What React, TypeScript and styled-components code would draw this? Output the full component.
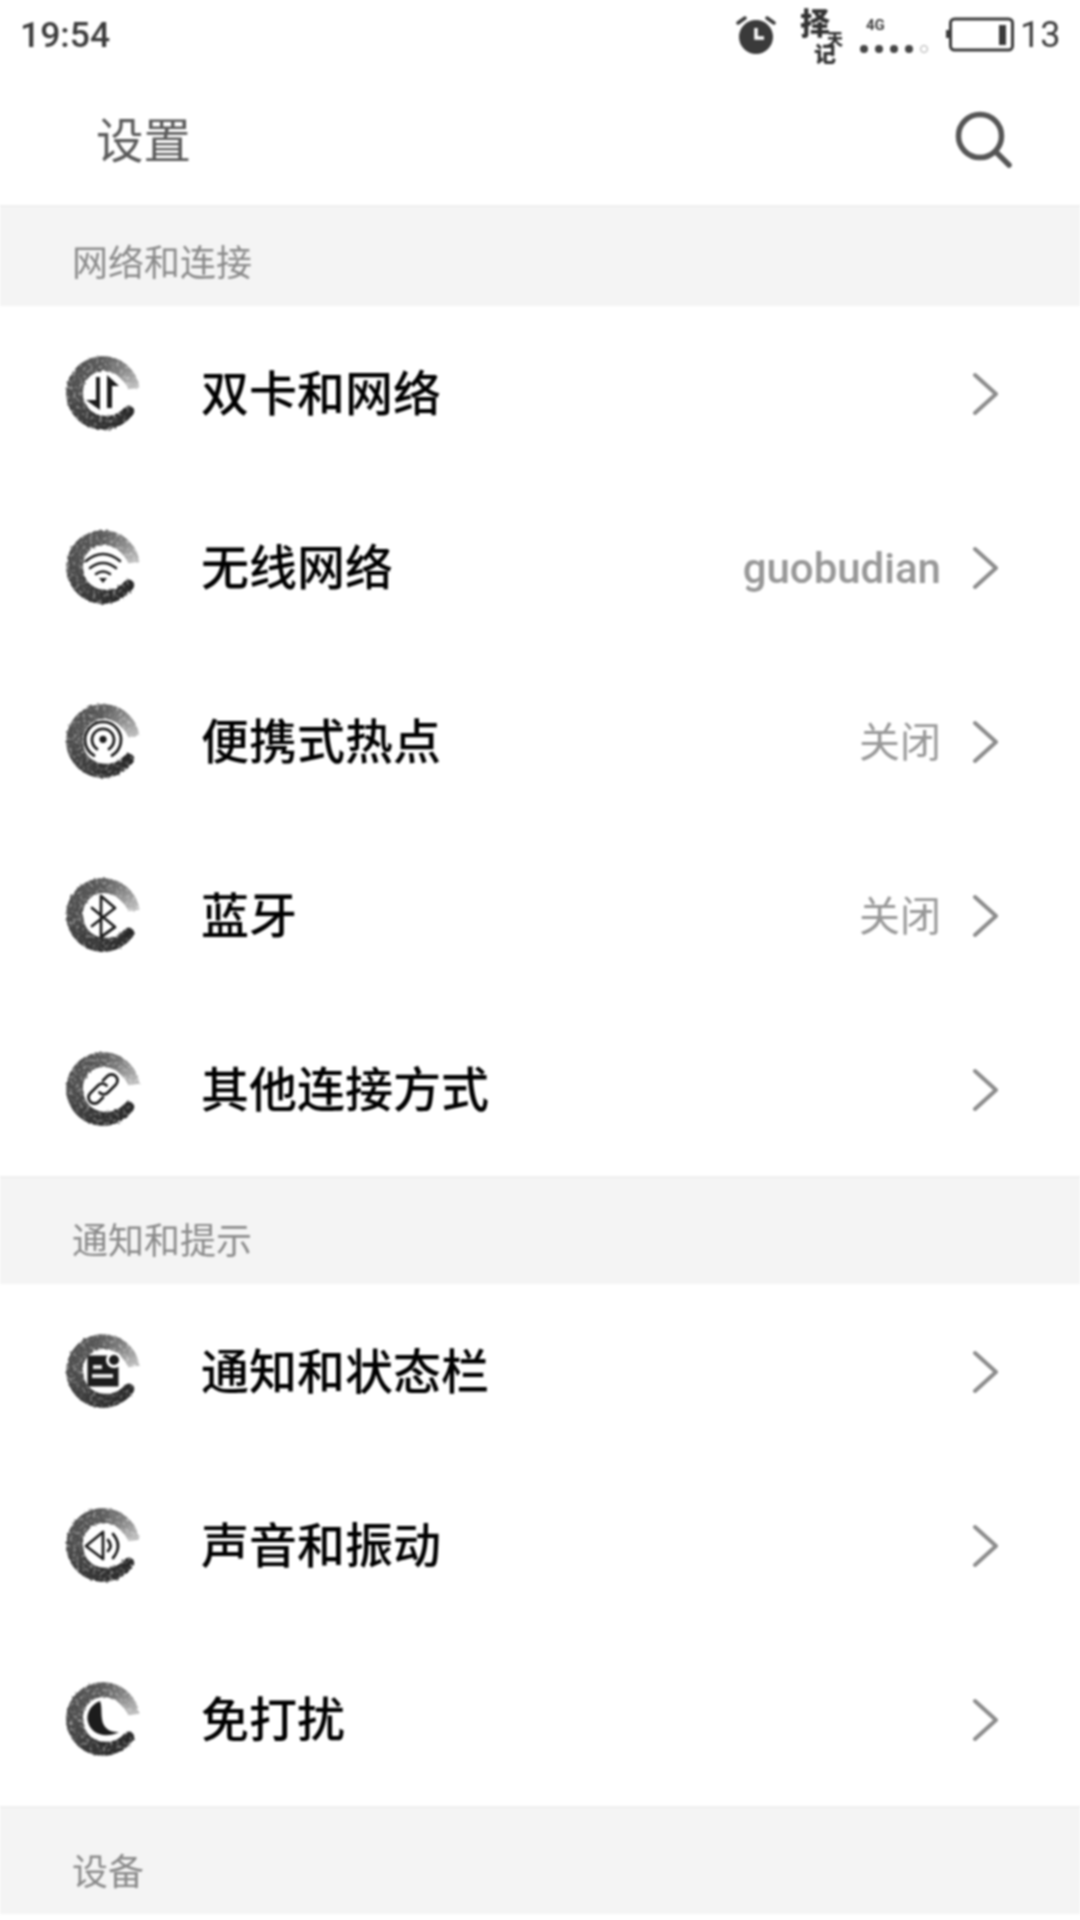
import React from "react";
import styled, { createGlobalStyle } from "styled-components";

const Global = createGlobalStyle`
  html, body { margin: 0; padding: 0; background: #fff; }
  body { font-family: "Noto Sans CJK SC", "Noto Sans", sans-serif; }
`;

const Page = styled.div`
  width: 1080px;
  height: 1920px;
  overflow: hidden;
  background: #fff;
  filter: blur(0.8px);
`;

const StatusBar = styled.div`
  height: 70px;
  display: flex;
  align-items: center;
  padding: 0 20px;
  color: #3c3c3c;
  font-family: Roboto, "Liberation Sans", sans-serif;
  font-size: 36px;
`;

const Clock = styled.span`
  flex: 1;
  line-height: 66px;
  font-weight: 500;
  font-size: 35.5px;
`;

const StatusIcon = styled.svg<{ $gap: number }>`
  display: block;
  margin-right: ${(p) => p.$gap}px;
`;

const Brush = styled.div`
  width: 46px;
  height: 52px;
  margin-right: 14px;
  display: flex;
  flex-direction: column;
  font-family: "Noto Sans CJK SC", sans-serif;
  font-weight: 900;
  color: #333;
`;

const BrushChar = styled.span<{ $size: number; $h: number; $shift: number }>`
  font-size: ${(p) => p.$size}px;
  height: ${(p) => p.$h}px;
  line-height: ${(p) => p.$h}px;
  margin-left: ${(p) => p.$shift}px;
`;

const Signal = styled.div`
  width: 70px;
  margin-right: 15px;
  display: flex;
  flex-direction: column;
  align-items: flex-start;
  gap: 12px;
`;

const Net = styled.span`
  font-size: 15px;
  line-height: 15px;
  font-weight: 700;
  color: #444;
  margin-left: 7px;
`;

const Dots = styled.div`
  display: flex;
  gap: 7px;
  align-items: center;
  padding-left: 1px;
`;

const Dot = styled.span<{ $off?: boolean }>`
  width: 8px;
  height: 8px;
  border-radius: 50%;
  box-sizing: border-box;
  background: ${(p) => (p.$off ? "#fff" : "#444")};
  border: ${(p) => (p.$off ? "1.5px solid #aaa" : "none")};
`;

const Level = styled.span`
  width: 40px;
  line-height: 66px;
`;

const Header = styled.header`
  height: 135px;
  display: flex;
  align-items: center;
  justify-content: space-between;
  padding: 0 67px 0 96px;
  box-sizing: border-box;
`;

const Title = styled.h1`
  margin: 0;
  font-size: 47.5px;
  font-weight: 400;
  color: #5a5a5a;
`;

const SearchIcon = styled.svg`
  display: block;
  margin-top: 5px;
`;

const Section = styled.div<{ $h: number; $pt: number }>`
  height: ${(p) => p.$h}px;
  box-sizing: border-box;
  padding: ${(p) => p.$pt}px 0 0 72px;
  background: #f4f4f4;
  border-top: 2px solid #efefef;
  font-size: 36px;
  line-height: 50px;
  color: #8a8a8a;
`;

const Row = styled.div`
  height: 174px;
  display: flex;
  align-items: center;
  padding: 0 81px 0 63px;
  background: #fff;
`;

const Label = styled.span`
  flex: 1;
  margin-left: 58px;
  padding-bottom: 6px;
  font-size: 48px;
  font-weight: 500;
  color: #000;
`;

const Value = styled.span`
  margin-right: 32px;
  padding-top: 3px;
  font-family: Roboto, "Noto Sans CJK SC", sans-serif;
  font-size: 42px;
  font-weight: 500;
  color: #989898;
`;

const ValueCn = styled(Value)`
  padding-top: 0;
  padding-bottom: 5px;
  font-size: 41px;
  font-weight: 400;
`;

const seg = (a0: number, a1: number, r: number) => {
  const p = (a: number) => [r * Math.cos((a * Math.PI) / 180), r * Math.sin((a * Math.PI) / 180)];
  const [x0, y0] = p(a0);
  const [x1, y1] = p(a1);
  return `M${x0.toFixed(2)} ${y0.toFixed(2)}A${r.toFixed(2)} ${r.toFixed(2)} 0 0 1 ${x1.toFixed(2)} ${y1.toFixed(2)}`;
};

const lerp = (s: [number, number][], t: number) => {
  for (let i = 1; i < s.length; i++) {
    if (t <= s[i][0]) {
      const k = (t - s[i - 1][0]) / (s[i][0] - s[i - 1][0]);
      return s[i - 1][1] + k * (s[i][1] - s[i - 1][1]);
    }
  }
  return s[s.length - 1][1];
};

const WIDTHS: [number, number][] = [[0, 11], [0.15, 14], [0.42, 17], [0.7, 15], [0.9, 14], [1, 11]];
const GRAYS: [number, number][] = [[0, 40], [0.2, 48], [0.45, 75], [0.72, 85], [0.86, 130], [1, 195]];

const RING = Array.from({ length: 64 }, (_, i) => {
  const t = i / 64;
  const w = lerp(WIDTHS, t);
  const g = Math.round(lerp(GRAYS, t));
  const a = 35 + t * 316;
  return { d: seg(a, a + 5.6, 36.8 - w / 2), w, c: `rgb(${g},${g},${g})` };
});

const GLYPH = "#1c1c1c";

const glyphs: Record<string, React.ReactNode> = {
  swap: (
    <g fill={GLYPH}>
      <path d="M-7 -16H-3V17L-17 7H-7Z" />
      <path d="M4 -18L16 -7H9V15H4Z" />
    </g>
  ),
  wifi: (
    <g fill="none" stroke={GLYPH} strokeWidth="2.6" strokeLinecap="round">
      <path d="M-17 -6Q0 -20 17 -6" />
      <path d="M-13 1Q0 -9 13 1" />
      <path d="M-7 7Q0 2 7 7" />
      <path d="M-4 11H4L0 16Z" fill={GLYPH} stroke="none" />
    </g>
  ),
  hotspot: (
    <g fill="none" stroke={GLYPH} strokeWidth="2.8" strokeLinecap="round">
      <circle cx="0" cy="-1.7" r="3.6" fill={GLYPH} stroke="none" />
      <path d="M-6 8A11 11 0 1 1 6 8" />
      <path d="M-9 14.5A18 18 0 1 1 9 14.5" />
    </g>
  ),
  bluetooth: (
    <path
      d="M-11 -7L12 12L-2 22V-19L12 -7L-11 11"
      fill="none"
      stroke={GLYPH}
      strokeWidth="2.8"
      strokeLinejoin="round"
      strokeLinecap="round"
    />
  ),
  link: (
    <g transform="rotate(-45)" fill="none" stroke={GLYPH} strokeWidth="2.8" strokeLinecap="round">
      <path d="M5 0A6 6 0 0 0 -1 -6H-12A6 6 0 0 0 -12 6H-6" />
      <path d="M-5 0A6 6 0 0 0 1 6H12A6 6 0 0 0 12 -6H6" />
    </g>
  ),
  note: (
    <g>
      <rect x="-15.5" y="-15.5" width="31" height="31" fill={GLYPH} />
      <rect x="-10" y="-6" width="9" height="4" fill="#e8e8e8" />
      <rect x="-11" y="3" width="21" height="4" fill="#e8e8e8" />
      <circle cx="11" cy="-11" r="8" fill="#fff" />
      <circle cx="11" cy="-11" r="5" fill={GLYPH} />
    </g>
  ),
  sound: (
    <g fill="none" stroke={GLYPH} strokeWidth="2.8" strokeLinecap="round" strokeLinejoin="round">
      <path d="M-17 1L0 -13V14Z" />
      <path d="M5 -5Q10 1 5 6" />
      <path d="M10 -11Q20 1 10 13" />
    </g>
  ),
  moon: (
    <path
      d="M-3 -18C-14 -14 -17 -3 -15 3C-12 15 2 20 16 13C6 14 0 8 -1 0C-2 -7 -1 -13 -3 -18Z"
      fill={GLYPH}
    />
  ),
};

const IconBox = styled.svg`
  display: block;
  flex: none;
`;

function RingIcon({ name, seed }: { name: string; seed: number }) {
  const id = `brush-${name}`;
  return (
    <IconBox width="80" height="80" viewBox="-40 -40 80 80">
      <defs>
        <filter id={id} x="-20%" y="-20%" width="140%" height="140%">
          <feTurbulence type="fractalNoise" baseFrequency="0.3" numOctaves="2" seed={seed} result="n" />
          <feDisplacementMap in="SourceGraphic" in2="n" scale="3" result="d" />
          <feColorMatrix
            in="n"
            type="matrix"
            values="0 0 0 0 0  0 0 0 0 0  0 0 0 0 0  1.4 0 0 0 0.3"
            result="m"
          />
          <feComposite in="d" in2="m" operator="in" />
        </filter>
      </defs>
      <g filter={`url(#${id})`}>
        {RING.map((s, i) => (
          <path key={i} d={s.d} fill="none" stroke={s.c} strokeWidth={s.w} />
        ))}
        <circle cx={(31.5 * Math.cos(0.61)).toFixed(2)} cy={(31.5 * Math.sin(0.61)).toFixed(2)} r="5.5" fill="#282828" />
      </g>
      {glyphs[name]}
    </IconBox>
  );
}

const ChevronSvg = styled.svg`
  display: block;
  flex: none;
  margin-top: 2px;
`;

const Chevron = () => (
  <ChevronSvg width="26" height="44" viewBox="0 0 26 44">
    <path d="M2 3L23 22L2 41" fill="none" stroke="#8c8c8c" strokeWidth="4" strokeLinecap="round" strokeLinejoin="round" />
  </ChevronSvg>
);

type Item = { icon: string; label: string; value?: string };

const Item = ({ icon, label, value }: Item, i: number) => (
  <Row key={label}>
    <RingIcon name={icon} seed={i + 3} />
    <Label>{label}</Label>
    {value === "guobudian" && <Value>{value}</Value>}
    {value && value !== "guobudian" && <ValueCn>{value}</ValueCn>}
    <Chevron />
  </Row>
);

const network: Item[] = [
  { icon: "swap", label: "双卡和网络" },
  { icon: "wifi", label: "无线网络", value: "guobudian" },
  { icon: "hotspot", label: "便携式热点", value: "关闭" },
  { icon: "bluetooth", label: "蓝牙", value: "关闭" },
  { icon: "link", label: "其他连接方式" },
];

const notify: Item[] = [
  { icon: "note", label: "通知和状态栏" },
  { icon: "sound", label: "声音和振动" },
  { icon: "moon", label: "免打扰" },
];

export default function App() {
  return (
    <Page>
      <Global />
      <StatusBar>
        <Clock>19:54</Clock>
        <StatusIcon $gap={21} width="44" height="44" viewBox="0 0 44 44">
          <circle cx="22" cy="24" r="17" fill="#3a3a3a" />
          <path d="M22 15V25H30" fill="none" stroke="#fff" strokeWidth="3.5" />
          <path d="M4 10L11 5M40 10L33 5" fill="none" stroke="#3a3a3a" strokeWidth="3.5" strokeLinecap="round" />
        </StatusIcon>
        <Brush>
          <BrushChar $size={30} $h={24} $shift={1}>择</BrushChar>
          <BrushChar $size={16} $h={11} $shift={28}>天</BrushChar>
          <BrushChar $size={22} $h={17} $shift={15}>记</BrushChar>
        </Brush>
        <Signal>
          <Net>4G</Net>
          <Dots>
            <Dot />
            <Dot />
            <Dot />
            <Dot />
            <Dot $off />
          </Dots>
        </Signal>
        <StatusIcon $gap={6} width="70" height="36" viewBox="0 0 70 36">
          <rect x="6.5" y="2" width="62" height="31" rx="4" fill="none" stroke="#3a3a3a" strokeWidth="3" />
          <path d="M5 13H2V21H5Z" fill="#3a3a3a" />
          <rect x="55" y="8" width="7" height="20" fill="#3a3a3a" />
        </StatusIcon>
        <Level>13</Level>
      </StatusBar>
      <Header>
        <Title>设置</Title>
        <SearchIcon width="58" height="58" viewBox="0 0 58 58" fill="none" stroke="#555" strokeWidth="5.5" strokeLinecap="round">
          <circle cx="25" cy="25" r="21.5" />
          <path d="M41 41L54 54" />
        </SearchIcon>
      </Header>
      <Section $h={101} $pt={28}>网络和连接</Section>
      {network.map(Item)}
      <Section $h={108} $pt={35}>通知和提示</Section>
      {notify.map((it, i) => Item(it, i + 7))}
      <Section $h={108} $pt={36}>设备</Section>
    </Page>
  );
}
